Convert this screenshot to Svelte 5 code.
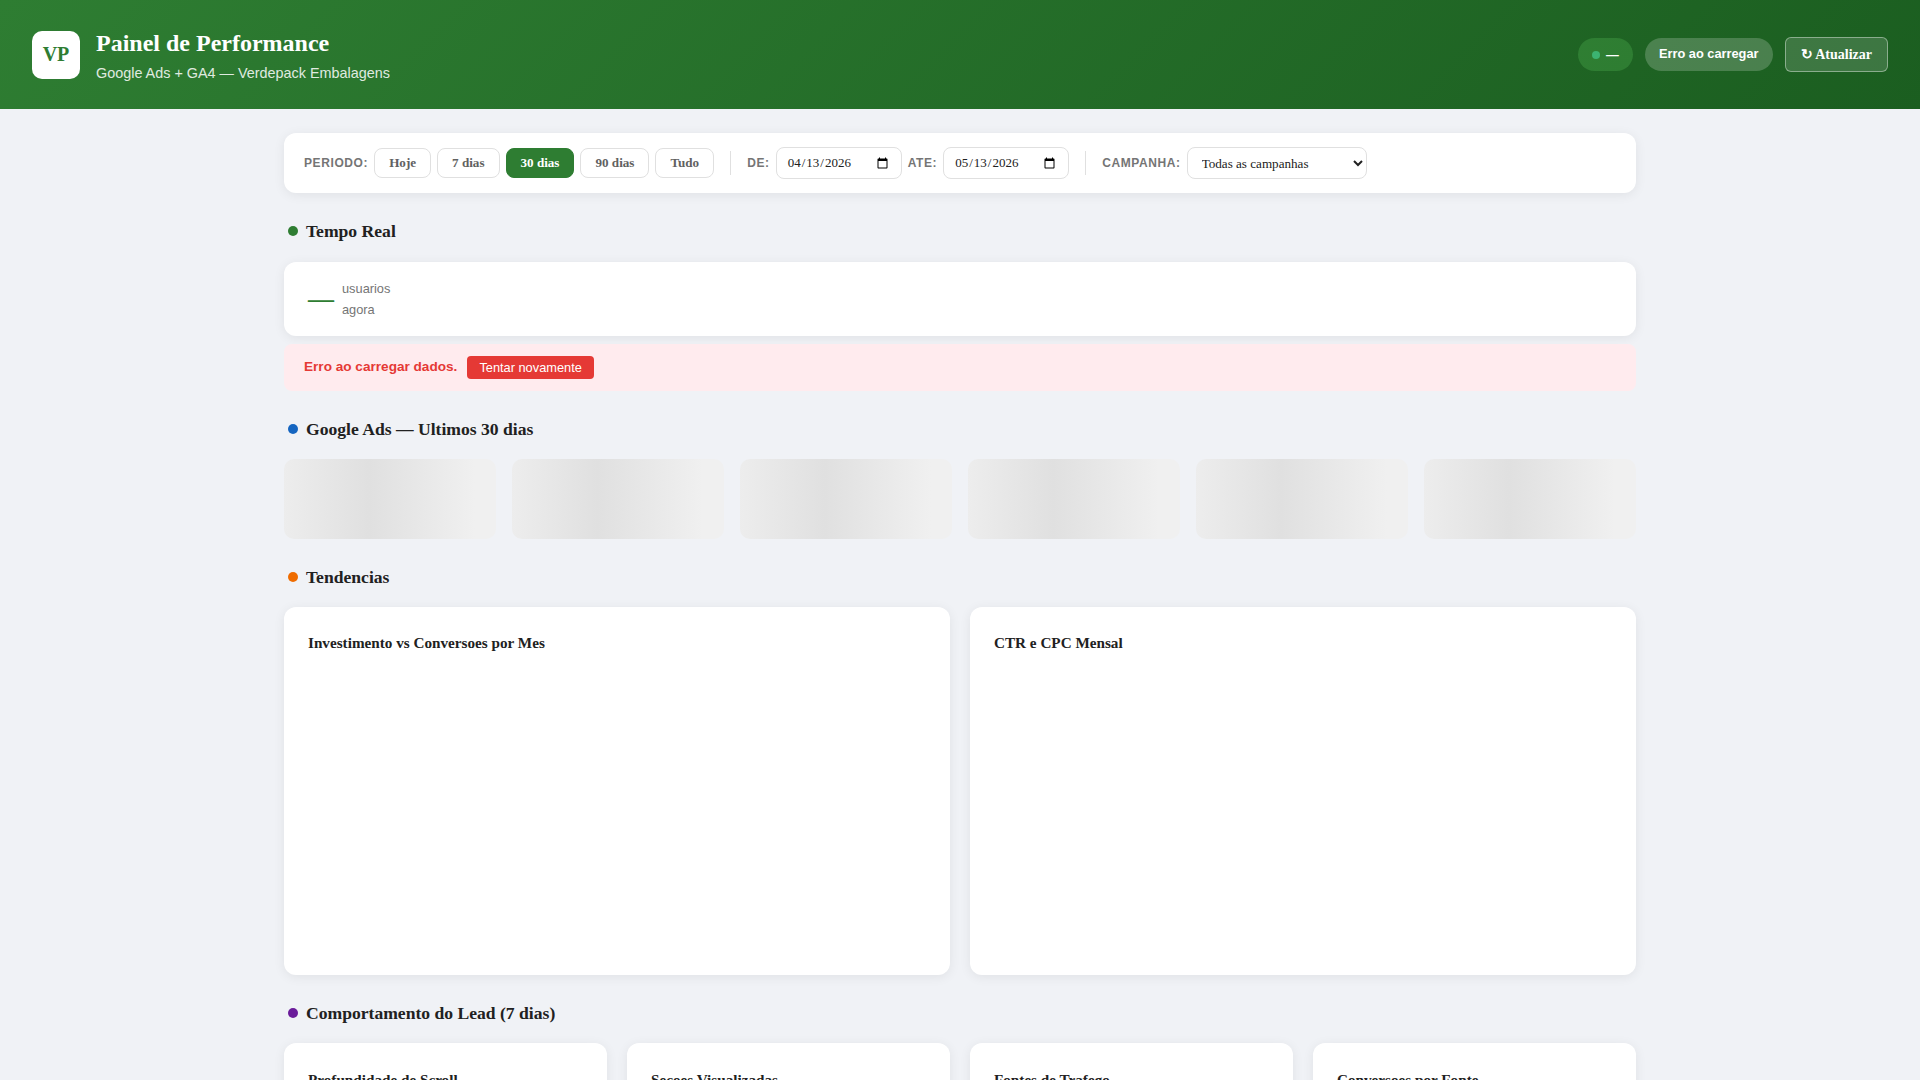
<script>
	const periods = ['Hoje', '7 dias', '30 dias', '90 dias', 'Tudo'];
	let period = $state('30 dias');

	const lead = ['Profundidade de Scroll', 'Secoes Visualizadas', 'Fontes de Trafego', 'Conversoes por Fonte'];
</script>

<header class="top">
	<div class="brand">
		<div class="logo">VP</div>
		<div class="titles">
			<h1>Painel de Performance</h1>
			<p>Google Ads + GA4 — Verdepack Embalagens</p>
		</div>
	</div>
	<div class="actions">
		<span class="pill live"><i></i>—</span>
		<span class="pill status">Erro ao carregar</span>
		<button class="refresh">↻ Atualizar</button>
	</div>
</header>

<main>
	<div class="filters">
		<span class="lbl">PERIODO:</span>
		{#each periods as p}
			<button class="chip" class:active={period === p} onclick={() => (period = p)}>{p}</button>
		{/each}
		<span class="sep"></span>
		<span class="lbl">DE:</span>
		<input type="date" value="2026-04-13" />
		<span class="lbl">ATE:</span>
		<input type="date" value="2026-05-13" />
		<span class="sep"></span>
		<span class="lbl">CAMPANHA:</span>
		<select>
			<option>Todas as campanhas</option>
		</select>
	</div>

	<h2 class="sec first"><i class="green"></i>Tempo Real</h2>
	<div class="card realtime">
		<strong class="num">—</strong>
		<span class="rt-label">usuarios<br />agora</span>
	</div>
	<div class="error">
		<b>Erro ao carregar dados.</b>
		<button>Tentar novamente</button>
	</div>

	<h2 class="sec"><i class="blue"></i>Google Ads — Ultimos 30 dias</h2>
	<div class="kpis">
		{#each Array(6) as _}
			<div class="skeleton"></div>
		{/each}
	</div>

	<h2 class="sec"><i class="orange"></i>Tendencias</h2>
	<div class="two">
		<div class="card chart"><h3>Investimento vs Conversoes por Mes</h3></div>
		<div class="card chart"><h3>CTR e CPC Mensal</h3></div>
	</div>

	<h2 class="sec"><i class="purple"></i>Comportamento do Lead (7 dias)</h2>
	<div class="four">
		{#each lead as t}
			<div class="card small"><h3>{t}</h3></div>
		{/each}
	</div>
</main>

<style>
	:global(body) {
		background: #f0f2f6;
		font-family: "Liberation Serif", serif;
		color: #212121;
	}
	.top {
		height: 109px;
		box-sizing: border-box;
		padding: 0 32px;
		display: flex;
		align-items: center;
		justify-content: space-between;
		background: linear-gradient(135deg, #2e7d32, #1b5e20);
		color: #fff;
	}
	.brand {
		display: flex;
		align-items: center;
		gap: 16px;
	}
	.titles {
		padding-top: 2px;
	}
	.logo {
		width: 48px;
		height: 48px;
		border-radius: 10px;
		background: #fff;
		color: #2e7d32;
		display: flex;
		align-items: center;
		justify-content: center;
		font-size: 20px;
		font-weight: 700;
	}
	h1 {
		margin: 0;
		font-size: 24px;
		font-weight: 700;
	}
	.brand p {
		margin: 8px 0 0;
		font: 14.4px "Liberation Sans", sans-serif;
		opacity: 0.85;
	}
	.actions {
		display: flex;
		align-items: center;
		gap: 12px;
	}
	.pill {
		height: 33px;
		box-sizing: border-box;
		border-radius: 20px;
		display: inline-flex;
		align-items: center;
		padding: 0 14px;
		font: 700 12.8px "Liberation Sans", sans-serif;
	}
	.live {
		gap: 6px;
		background: rgba(76, 175, 80, 0.35);
	}
	.live i {
		width: 8px;
		height: 8px;
		border-radius: 50%;
		background: #3cb371;
	}
	.status {
		padding-bottom: 2px;
		background: rgba(255, 255, 255, 0.2);
	}
	.refresh {
		height: 35px;
		padding: 0 15px;
		border: 1px solid rgba(255, 255, 255, 0.4);
		border-radius: 6px;
		background: rgba(255, 255, 255, 0.15);
		color: #fff;
		font: 700 14px "Liberation Serif", serif;
	}
	main {
		max-width: 1352px;
		margin: 0 auto;
		padding-top: 24px;
	}
	.filters {
		height: 60px;
		box-sizing: border-box;
		padding: 0 20px;
		display: flex;
		align-items: center;
		gap: 6px;
		background: #fff;
		border-radius: 12px;
		box-shadow: 0 2px 12px rgba(0, 0, 0, 0.07);
	}
	.lbl {
		font: 700 12px "Liberation Sans", sans-serif;
		letter-spacing: 0.6px;
		color: #757575;
		margin-top: -1px;
	}
	.chip {
		height: 30px;
		padding: 0 14px;
		border: 1px solid #e0e0e0;
		border-radius: 8px;
		background: #fff;
		color: #616161;
		font: 700 13.12px "Liberation Serif", serif;
	}
	.chip.active {
		background: #2e7d32;
		border-color: #2e7d32;
		color: #fff;
	}
	.sep {
		width: 1px;
		height: 24px;
		background: #e0e0e0;
		margin: 0 10px;
	}
	input, select {
		height: 32px;
		box-sizing: border-box;
		border: 1px solid #e0e0e0;
		border-radius: 8px;
		background: #fff;
		color: #212121;
		font: 13px "Liberation Serif", serif;
	}
	input {
		padding: 0 10px;
		width: 126px;
	}
	select {
		padding: 0 10px;
		width: 180px;
		font-size: 13.12px;
	}
	.sec {
		margin: 0;
		height: 68px;
		padding: 8px 0 0 4px;
		box-sizing: border-box;
		display: flex;
		align-items: center;
		gap: 8px;
		font-size: 17.6px;
		font-weight: 700;
	}
	.sec.first {
		height: 69px;
		padding-top: 7px;
	}
	.sec i {
		width: 10px;
		height: 10px;
		border-radius: 50%;
	}
	.green { background: #2e7d32; }
	.blue { background: #1565c0; }
	.orange { background: #ef6c00; }
	.purple { background: #6a1b9a; }
	.card {
		background: #fff;
		border-radius: 12px;
		box-shadow: 0 2px 12px rgba(0, 0, 0, 0.07);
	}
	.realtime {
		height: 74px;
		box-sizing: border-box;
		padding: 0 24px;
		display: flex;
		align-items: center;
		gap: 8px;
	}
	.num {
		color: #2e7d32;
		font-size: 26px;
	}
	.rt-label {
		font: 12.8px/21px "Liberation Sans", sans-serif;
		color: #757575;
	}
	.error {
		margin-top: 8px;
		height: 47px;
		box-sizing: border-box;
		padding: 0 20px;
		display: flex;
		align-items: center;
		gap: 10px;
		background: #ffebee;
		border-radius: 8px;
		font: 13.6px "Liberation Sans", sans-serif;
		color: #e53935;
	}
	.error b {
		margin-top: -2px;
	}
	.error button {
		height: 23px;
		padding: 0 12px;
		border: 0;
		border-radius: 4px;
		background: #e53935;
		color: #fff;
		font: 12.8px "Liberation Sans", sans-serif;
	}
	.kpis {
		display: grid;
		grid-template-columns: repeat(6, 1fr);
		gap: 16px;
	}
	.skeleton {
		height: 80px;
		border-radius: 10px;
		background: linear-gradient(90deg, #f0f0f0 25%, #e0e0e0 50%, #f0f0f0 75%);
		background-size: 200% 100%;
		background-position: 60% 0;
	}
	.two {
		display: grid;
		grid-template-columns: 1fr 1fr;
		gap: 20px;
	}
	.four {
		display: grid;
		grid-template-columns: repeat(4, 1fr);
		gap: 20px;
	}
	.chart {
		height: 368px;
		box-sizing: border-box;
		padding: 24px;
	}
	.small {
		height: 340px;
		box-sizing: border-box;
		padding: 25px 24px;
	}
	h3 {
		margin: 3px 0 0;
		font-size: 15.2px;
		font-weight: 700;
	}
</style>
